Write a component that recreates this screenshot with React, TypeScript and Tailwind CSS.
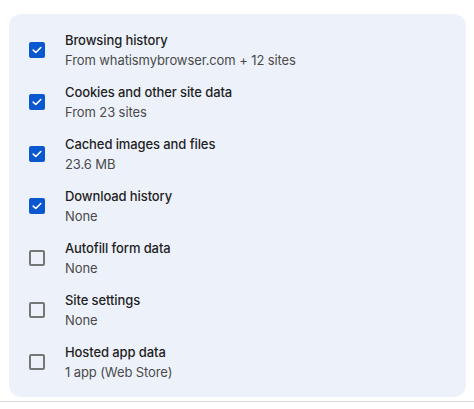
import React, { useState } from "react";

type Item = { title: string; detail: string; checked: boolean };

const initialItems: Item[] = [
  { title: "Browsing history", detail: "From whatismybrowser.com + 12 sites", checked: true },
  { title: "Cookies and other site data", detail: "From 23 sites", checked: true },
  { title: "Cached images and files", detail: "23.6 MB", checked: true },
  { title: "Download history", detail: "None", checked: true },
  { title: "Autofill form data", detail: "None", checked: false },
  { title: "Site settings", detail: "None", checked: false },
  { title: "Hosted app data", detail: "1 app (Web Store)", checked: false },
];

const Checkbox: React.FC<{ checked: boolean; onToggle: () => void }> = ({ checked, onToggle }) => (
  <button
    type="button"
    role="checkbox"
    aria-checked={checked}
    onClick={onToggle}
    className={
      checked
        ? "w-4 h-4 shrink-0 rounded-[2px] bg-[#0b57d0] flex items-center justify-center"
        : "w-4 h-4 shrink-0 rounded-[2px] border-2 border-[#747775] bg-transparent"
    }
  >
    {checked && (
      <svg width="10" height="8" viewBox="0 0 10 8" fill="none">
        <path d="M1.2 4.1 3.8 6.5 8.8 1.5" stroke="white" strokeWidth="1.6" strokeLinecap="round" strokeLinejoin="round" />
      </svg>
    )}
  </button>
);

export default function App() {
  const [items, setItems] = useState(initialItems);

  const toggle = (idx: number) =>
    setItems((prev) => prev.map((it, i) => (i === idx ? { ...it, checked: !it.checked } : it)));

  return (
    <div className="w-[474px] h-[409px] bg-white pt-[14px] font-['Inter','Liberation_Sans',sans-serif]">
      <div className="ml-[9px] w-[457px] rounded-[12px] bg-[#edf2fa] pl-[20px] pt-[10px] pb-[9px]">
        {items.map((it, idx) => (
          <div key={it.title} className="flex items-center gap-[20px] h-[52px]">
            <Checkbox checked={it.checked} onToggle={() => toggle(idx)} />
            <div className="flex flex-col tracking-[-0.1px]">
              <span className="text-[13px] leading-[20px] font-medium text-[#1f1f1f]">{it.title}</span>
              <span className="text-[13px] leading-[20px] text-[#4a4a4a]">{it.detail}</span>
            </div>
          </div>
        ))}
      </div>
      <div className="mt-[4px] h-px bg-[#d9d9d9]" />
    </div>
  );
}
